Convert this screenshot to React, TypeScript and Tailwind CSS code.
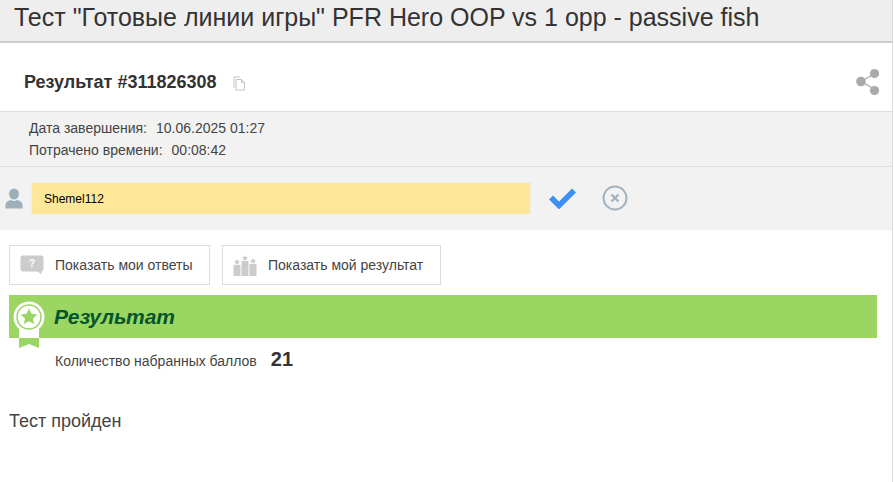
function CopyIcon() {
  return (
    <svg width="13" height="15" viewBox="0 0 13 15" fill="none" stroke="#c4c4c4" strokeWidth="1">
      <path d="M1 11.5V1h6" />
      <path d="M3 3.5h5.5l3 3v7.5H3z" fill="#fff" />
      <path d="M8.5 3.5v3h3" />
    </svg>
  );
}

function ShareIcon() {
  return (
    <svg width="24" height="27" viewBox="0 0 24 27" fill="#aaaaaa">
      <path d="M7 12.5 18 6M7 14.500l11 6.500" stroke="#aaaaaa" strokeWidth="1.2" />
      <circle cx="18.5" cy="5.5" r="4.6" />
      <circle cx="5" cy="13.5" r="4.8" />
      <circle cx="18.5" cy="22.5" r="4.6" />
    </svg>
  );
}

function UserIcon() {
  return (
    <svg width="18" height="21" viewBox="0 0 18 21" fill="#a0b0bb">
      <ellipse cx="9" cy="6" rx="5" ry="5.6" />
      <path d="M0.5 20.5v-3.5c0-3 3-4.6 5.5-5 1.800 1.200 4.200 1.200 6 0 2.500.4 5.500 2 5.500 5v3.500z" />
    </svg>
  );
}

function CheckIcon() {
  return (
    <svg width="27" height="22" viewBox="0 0 27 22" fill="none" stroke="#3d8ff5" strokeWidth="5.5">
      <path d="M2 10.500l8 8 15-15" />
    </svg>
  );
}

function CancelIcon() {
  return (
    <svg width="26" height="26" viewBox="0 0 26 26" fill="none" stroke="#a4b2bc">
      <circle cx="13" cy="13" r="11.5" strokeWidth="2" />
      <path d="M9.500 9.500l7 7M16.500 9.500l-7 7" strokeWidth="2.4" />
    </svg>
  );
}

function QuestionIcon() {
  return (
    <svg width="24" height="20" viewBox="0 0 24 20">
      <path d="M3 0.500h18a2.500 2.500 0 0 1 2.500 2.500v11.500a2 2 0 0 1-2 2v3l-4-3H3A2.500 2.500 0 0 1 .5 14V3A2.500 2.500 0 0 1 3 .5z" fill="#cccccc" />
      <text x="12" y="12" fontSize="10" fontWeight="700" textAnchor="middle" fill="#fff" fontFamily="Liberation Sans, sans-serif">?</text>
    </svg>
  );
}

function RatingIcon() {
  return (
    <svg width="24" height="21" viewBox="0 0 24 21" fill="#cccccc">
      <rect x="0.500" y="10" width="7" height="11" />
      <rect x="8.500" y="6" width="7" height="15" />
      <rect x="16.500" y="9" width="7" height="12" />
      <path d="M4 4l1 2 2 .3-1.500 1.400.4 2L4 8.700l-1.900 1 .4-2L1 6.300 3 6z" />
      <path d="M12 0l1 2 2 .3-1.500 1.400.4 2L12 4.700l-1.900 1 .4-2L9 2.300 11 2z" />
      <path d="M20 3l1 2 2 .3-1.500 1.400.4 2L20 7.700l-1.900 1 .4-2L17 5.300 19 5z" />
    </svg>
  );
}

function MedalIcon() {
  return (
    <svg width="32" height="48" viewBox="0 0 32 48">
      {/* ribbon: white over the green bar, green below it */}
      <path d="M6 28h20v9H6z" fill="#ffffff" />
      <path d="M6 37h20v10l-10-4-10 4z" fill="#9bd562" />
      <circle cx="16" cy="16" r="15.500" fill="#ffffff" />
      <circle cx="16" cy="16" r="12" fill="none" stroke="#9bd562" strokeWidth="1.500" />
      <path d="M16 7.500l2.500 5.300 5.800.7-4.300 3.900 1.200 5.700-5.200-2.900-5.200 2.900 1.200-5.700-4.300-3.900 5.800-.7z" fill="#9bd562" />
    </svg>
  );
}

export default function App() {
  return (
    <div className="h-[482px] w-[893px] overflow-hidden border-r border-[#dddddd] bg-white font-['Liberation_Sans',Arial,sans-serif] text-[#333333]">
      <div className="flex h-[43px] items-center border-b-2 border-[#cccccc] bg-[#eeeeee] pb-[6px] pl-[14px]">
        <h1 className="text-[25px] leading-none whitespace-nowrap text-[#333333]">
          Тест "Готовые линии игры" PFR Hero OOP vs 1 opp - passive fish
        </h1>
      </div>

      <div className="flex h-[68px] items-center justify-between pt-2 pr-3 pl-6">
        <div className="mt-[2px] flex items-center">
          <span className="text-[18px] font-bold">Результат #311826308</span>
          <span className="mt-[3px] ml-4 flex">
            <CopyIcon />
          </span>
        </div>
        <ShareIcon />
      </div>

      <div className="h-[56px] border-y border-[#dddddd] bg-[#f2f2f2] pt-[5px] pl-[29px] text-[14px] leading-[22px] text-[#444444]">
        <div>
          Дата завершения:<span className="ml-[9px]">10.06.2025 01:27</span>
        </div>
        <div>
          Потрачено времени:<span className="ml-[9px]">00:08:42</span>
        </div>
      </div>

      <div className="flex h-[63px] items-center bg-[#f2f2f2] pb-[1px] pl-[5px]">
        <UserIcon />
        <input
          readOnly
          value="Shemel112"
          className="ml-2 h-[33px] w-[500px] rounded-[1px] border border-[#eeeeee] bg-[#ffe799] pt-[1px] pl-3 text-[12px] text-black outline-none"
        />
        <span className="ml-[18px] flex">
          <CheckIcon />
        </span>
        <span className="ml-[26px] flex">
          <CancelIcon />
        </span>
      </div>

      <div className="flex gap-3 pt-[15px] pl-[9px]">
        <button className="flex h-10 w-[201px] items-center border border-[#dddddd] bg-white pl-[10px] text-[14px] text-[#444444]">
          <QuestionIcon />
          <span className="ml-[11px]">Показать мои ответы</span>
        </button>
        <button className="flex h-10 w-[219px] items-center border border-[#dddddd] bg-white pl-[10px] text-[14px] text-[#444444]">
          <RatingIcon />
          <span className="ml-[11px]">Показать мой результат</span>
        </button>
      </div>

      <div className="relative mt-[10px] ml-[9px] flex h-[43px] w-[868px] items-center bg-[#9bd562] pl-[45px]">
        <span className="absolute top-[6px] left-1 z-10 flex">
          <MedalIcon />
        </span>
        <h2 className="text-[21px] font-bold text-[#03562d] italic">Результат</h2>
      </div>

      <div className="mt-[8px] flex items-center pl-[55px]">
        <span className="mt-[2px] text-[14px] text-[#444444]">Количество набранных баллов</span>
        <span className="-mt-[2px] ml-[14px] text-[20px] font-bold">21</span>
      </div>

      <p className="mt-[34px] pl-[9px] text-[18px] text-[#444444]">Тест пройден</p>
    </div>
  );
}
